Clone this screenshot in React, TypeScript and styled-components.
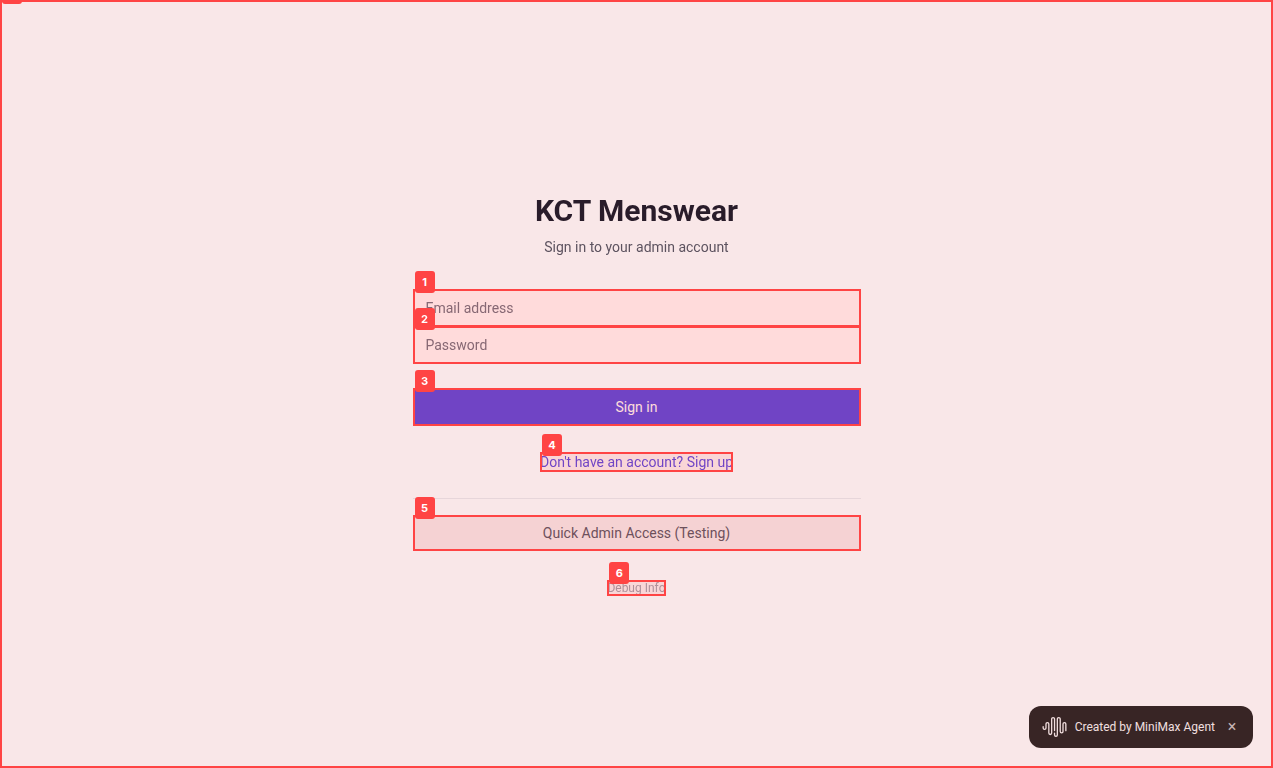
import React from "react";
import styled, { createGlobalStyle, css } from "styled-components";

const RED = "#ff4444";
const TINT = "rgba(255, 68, 68, 0.1)";

const GlobalStyle = createGlobalStyle`
  *, *::before, *::after { box-sizing: border-box; }
  body {
    margin: 0;
    background: #f9fafb;
    font-family: Roboto, "Liberation Sans", sans-serif;
    font-size: 14px;
    line-height: 20px;
  }
  button, input { font: inherit; margin: 0; }
`;

/* Own compositing layer, so that text is smoothed in greyscale. */
const Shell = styled.div`
  will-change: opacity;
`;

const Page = styled.main`
  min-height: 100vh;
  display: flex;
  flex-direction: column;
  align-items: center;
  justify-content: center;
  padding: 69px 16px 48px;
`;

const PageFrame = styled.div`
  position: fixed;
  inset: 0;
  z-index: 5;
  border: 2px solid ${RED};
  background: ${TINT};
  pointer-events: none;
`;

const FrameTab = styled.div`
  position: fixed;
  top: -18px;
  left: 2px;
  z-index: 6;
  width: 20px;
  height: 22px;
  border-radius: 3px;
  background: ${RED};
`;

const Column = styled.div`
  width: 100%;
  max-width: 448px;
  display: flex;
  flex-direction: column;
`;

const Title = styled.h1`
  margin: 0;
  font-size: 30px;
  line-height: 36px;
  font-weight: 700;
  text-align: center;
  color: #111827;
`;

const Subtitle = styled.p`
  margin: 8px 0 32px;
  text-align: center;
  color: #4b5563;
`;

const Form = styled.form`
  display: flex;
  flex-direction: column;
`;

const Marked = styled.div<{ $fit?: boolean; $overlap?: boolean }>`
  position: relative;
  display: flex;
  ${(p) => p.$fit && css`align-self: center;`}
  ${(p) => p.$overlap && css`margin-top: -1px;`}

  &::after {
    content: "";
    position: absolute;
    inset: 0;
    border: 2px solid ${RED};
    background: ${TINT};
    pointer-events: none;
  }
`;

const Badge = styled.span`
  position: absolute;
  top: -18px;
  left: 2px;
  z-index: 6;
  width: 20px;
  height: 22px;
  border-radius: 3px;
  background: ${RED};
  color: #ffffff;
  font: bold 11px/22px Inter, "Liberation Sans", sans-serif;
  text-align: center;
`;

const Input = styled.input`
  width: 100%;
  height: 38px;
  padding: 8px 12px;
  border: 1px solid #d1d5db;
  border-radius: 0;
  background: #ffffff;
  color: #111827;
  outline: none;

  &::placeholder { color: #6b7280; opacity: 1; }
`;

const SubmitButton = styled.button`
  width: 100%;
  height: 38px;
  border: 0;
  background: #4f46e5;
  color: #ffffff;
  cursor: pointer;
`;

const SubmitArea = styled.div`
  padding: 24px 0 26px;
`;

const TextButton = styled.button<{ $muted?: boolean }>`
  padding: 0;
  border: 0;
  background: none;
  color: ${(p) => (p.$muted ? "#9ca3af" : "#4f46e5")};
  font-size: ${(p) => (p.$muted ? 12 : 14)}px;
  line-height: ${(p) => (p.$muted ? 16 : 20)}px;
  cursor: pointer;
`;

const QuickAccess = styled.div`
  margin: 26px 0 29px;
  padding-top: 16px;
  border-top: 1px solid #e5e7eb;
`;

const QuickButton = styled.button`
  width: 100%;
  height: 36px;
  border: 0;
  background: #f3f4f6;
  color: #4b5563;
  cursor: pointer;
`;

const Toast = styled.aside`
  position: fixed;
  right: 20px;
  bottom: 20px;
  display: flex;
  align-items: center;
  gap: 8px;
  height: 42px;
  padding: 0 12px 0 13px;
  border-radius: 12px;
  background: #222222;
  color: #f0f0f0;
  font-size: 12px;
  line-height: 18px;
`;

const CloseButton = styled.button`
  width: 18px;
  height: 18px;
  padding: 0;
  border: 0;
  background: none;
  color: #c0c0c0;
  font-size: 16px;
  line-height: 18px;
  cursor: pointer;
`;

const WaveLogo = () => (
  <svg width="25" height="24" viewBox="0 0 24 24" fill="currentColor" aria-hidden="true">
    <path d="M16.278 2c1.156 0 2.093.927 2.093 2.07v12.501a.74.74 0 00.744.709.74.74 0 00.743-.709V9.099a2.06 2.06 0 012.071-2.049A2.06 2.06 0 0124 9.1v6.561a.649.649 0 01-.652.645.649.649 0 01-.653-.645V9.1a.762.762 0 00-.766-.758.762.762 0 00-.766.758v7.472a2.037 2.037 0 01-2.048 2.026 2.037 2.037 0 01-2.048-2.026v-12.5a.785.785 0 00-.788-.753.785.785 0 00-.789.752l-.001 15.904A2.037 2.037 0 0113.441 22a2.037 2.037 0 01-2.048-2.026V18.04c0-.356.292-.645.652-.645.36 0 .652.289.652.645v1.934c0 .263.142.506.372.638.23.131.514.131.744 0a.734.734 0 00.372-.638V4.07c0-1.143.937-2.07 2.093-2.07zm-5.674 0c1.156 0 2.093.927 2.093 2.07v11.523a.648.648 0 01-.652.645.648.648 0 01-.652-.645V4.07a.785.785 0 00-.789-.78.785.785 0 00-.789.78v14.013a2.06 2.06 0 01-2.07 2.048 2.06 2.06 0 01-2.071-2.048V9.1a.762.762 0 00-.766-.758.762.762 0 00-.766.758v3.8a2.06 2.06 0 01-2.071 2.049A2.06 2.06 0 010 12.9v-1.378c0-.357.292-.646.653-.646.36 0 .653.29.653.646V12.9c0 .418.343.757.766.757s.766-.339.766-.757V9.099a2.06 2.06 0 012.07-2.048 2.06 2.06 0 012.071 2.048v8.984c0 .419.343.758.767.758.423 0 .766-.339.766-.758V4.07c0-1.143.937-2.07 2.093-2.07z" />
  </svg>
);

export default function App() {
  return (
    <Shell>
      <GlobalStyle />
      <Page>
        <Column>
          <Title>KCT Menswear</Title>
          <Subtitle>Sign in to your admin account</Subtitle>
          <Form onSubmit={(e) => e.preventDefault()}>
            <Marked>
              <Input type="email" aria-label="Email address" placeholder="Email address" />
              <Badge>1</Badge>
            </Marked>
            <Marked $overlap>
              <Input type="password" aria-label="Password" placeholder="Password" />
              <Badge>2</Badge>
            </Marked>
            <SubmitArea>
              <Marked>
                <SubmitButton type="submit">Sign in</SubmitButton>
                <Badge>3</Badge>
              </Marked>
            </SubmitArea>
            <Marked $fit>
              <TextButton type="button">Don't have an account? Sign up</TextButton>
              <Badge>4</Badge>
            </Marked>
          </Form>
          <QuickAccess>
            <Marked>
              <QuickButton type="button">Quick Admin Access (Testing)</QuickButton>
              <Badge>5</Badge>
            </Marked>
          </QuickAccess>
          <Marked $fit>
            <TextButton type="button" $muted>Debug Info</TextButton>
            <Badge>6</Badge>
          </Marked>
        </Column>
      </Page>
      <Toast>
        <WaveLogo />
        <span>Created by MiniMax Agent</span>
        <CloseButton type="button" aria-label="Close">×</CloseButton>
      </Toast>
      <PageFrame />
      <FrameTab />
    </Shell>
  );
}
